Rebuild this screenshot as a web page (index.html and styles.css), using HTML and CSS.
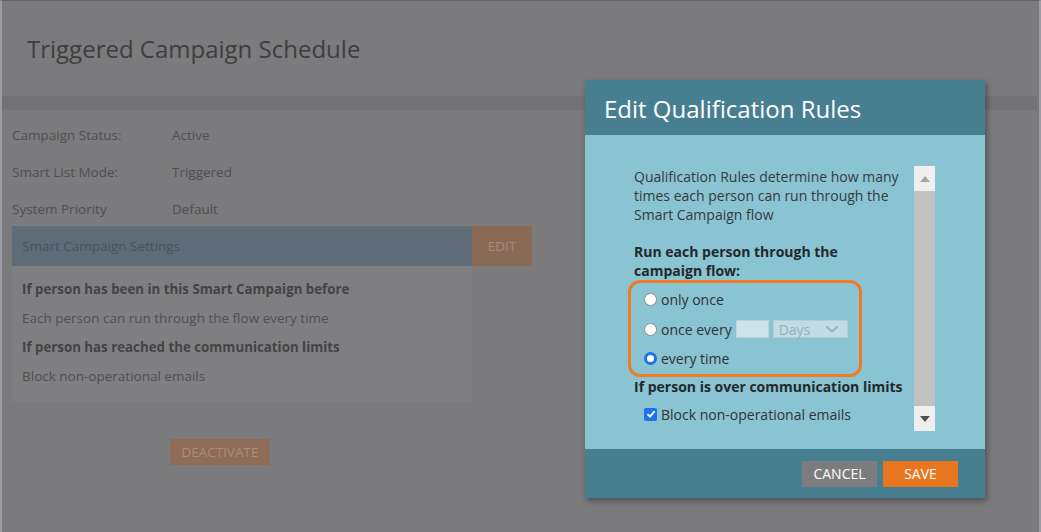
FILE: index.html
```html
<!DOCTYPE html>
<html>
<head>
<meta charset="utf-8">
<link rel="stylesheet" href="styles.css">
</head>
<body>
<div class="frame">
  <div class="page">
    <h1 class="title">Triggered Campaign Schedule</h1>
    <div class="band"></div>
    <div class="info">
      <div class="row"><span class="lbl">Campaign Status:</span><span>Active</span></div>
      <div class="row"><span class="lbl">Smart List Mode:</span><span>Triggered</span></div>
      <div class="row"><span class="lbl">System Priority</span><span>Default</span></div>
    </div>
    <div class="settings">
      <div class="settings-head">
        <span class="settings-title">Smart Campaign Settings</span>
        <span class="edit">EDIT</span>
      </div>
      <div class="settings-body">
        <p class="b">If person has been in this Smart Campaign before</p>
        <p>Each person can run through the flow every time</p>
        <p class="b">If person has reached the communication limits</p>
        <p>Block non-operational emails</p>
      </div>
    </div>
    <div class="deact-wrap"><span class="deact">DEACTIVATE</span></div>
  </div>

  <div class="modal">
    <div class="modal-head">Edit Qualification Rules</div>
    <div class="modal-body">
      <div class="scrollbox">
        <div class="content">
          <p class="intro">Qualification Rules determine how many times each person can run through the Smart Campaign flow</p>
          <p class="heading">Run each person through the campaign flow:</p>
          <div class="highlight">
            <label class="opt"><span class="radio"></span>only once</label>
            <label class="opt"><span class="radio"></span>once every <span class="num"></span><span class="sel">Days<svg width="14" height="8" viewBox="0 0 14 8"><path d="M1.5 1.5 L7 6.5 L12.5 1.5" fill="none" stroke="#98b4bd" stroke-width="1.8"/></svg></span></label>
            <label class="opt"><span class="radio on"></span>every time</label>
          </div>
          <p class="heading h2">If person is over communication limits</p>
          <label class="opt chk"><span class="check"><svg width="12" height="12" viewBox="0 0 12 12"><path d="M2.5 6.2 L5 8.7 L9.6 3.2" fill="none" stroke="#fff" stroke-width="1.9"/></svg></span>Block non-operational emails</label>
        </div>
        <div class="sbar">
          <div class="arrow"><svg width="10" height="6" viewBox="0 0 10 6"><path d="M0 6 L5 0 L10 6 Z" fill="#a3a3a3"/></svg></div>
          <div class="thumb"></div>
          <div class="arrow"><svg width="10" height="6" viewBox="0 0 10 6"><path d="M0 0 L5 6 L10 0 Z" fill="#505050"/></svg></div>
        </div>
      </div>
    </div>
    <div class="modal-foot">
      <span class="btn cancel">CANCEL</span>
      <span class="btn save">SAVE</span>
    </div>
  </div>
</div>
</body>
</html>
```

FILE: styles.css
```css
* { box-sizing: border-box; }
html, body { margin: 0; padding: 0; }
body {
  font-family: "Open Sans", "Liberation Sans", sans-serif;
  background: #7b7b7d;
  width: 1041px;
  height: 532px;
  overflow: hidden;
}
.frame {
  position: relative;
  width: 1041px;
  height: 532px;
  border-top: 1px solid #67676a;
  border-left: 2px solid #9c9ca6;
  border-right: 2px solid #9c9ca6;
  background: #7b7b7d;
}
.page { display: flex; flex-direction: column; }
.title {
  margin: 0;
  padding: 32px 0 0 25px;
  height: 95px;
  font-weight: 400;
  font-size: 24px;
  color: #3e3e40;
  line-height: 32px;
}
.band { height: 14px; background: #737375; margin-right: 2px; }
.info { padding: 13px 0 0 10px; display: flex; flex-direction: column; height: 116px; }
.row { display: flex; height: 37px; flex: none; font-size: 13.5px; color: #505052; line-height: 24px; }
.lbl { width: 160px; }
.settings { margin-left: 10px; width: 520px; }
.settings-head { display: flex; height: 40px; background: #5f6c77; }
.settings-title { flex: 1; padding-left: 10px; line-height: 40px; font-size: 13.5px; color: #4a535c; }
.edit { width: 60px; background: #8a6a55; color: #a08b7e; font-size: 13.5px; line-height: 40px; text-align: center; }
.settings-body { width: 460px; height: 136px; background: #7f7f82; padding: 12px 10px 0 10px; }
.settings-body p { margin: 0; height: 29px; font-size: 13.5px; line-height: 22px; color: #505052; }
.settings-body p.b { font-weight: 700; color: #434345; font-size: 13.3px; }
.deact-wrap { padding: 37px 0 0 168px; }
.deact { display: inline-block; width: 100px; height: 26px; background: #8e6c55; color: #a88d7b; font-size: 13.5px; line-height: 26px; text-align: center; }

.modal {
  position: absolute;
  left: 583px;
  top: 79px;
  width: 400px;
  height: 418px;
  display: flex;
  flex-direction: column;
  box-shadow: 2px 3px 6px rgba(0,0,0,0.35);
}
.modal-head {
  height: 55px;
  background: #477f91;
  color: #fff;
  font-size: 24px;
  line-height: 58px;
  padding-left: 19px;
}
.modal-body {
  height: 314px;
  background: #8ac3d2;
  padding: 31px 0 0 49px;
}
.scrollbox { display: flex; height: 265px; width: 300px; }
.content { flex: 1; color: #2e3436; font-size: 14px; padding-top: 1px; }
.content p { margin: 0; }
.intro { line-height: 19px; width: 272px; color: #333b3e; }
.heading { font-weight: 700; line-height: 19px; margin-top: 18px !important; width: 240px; color: #23292b; }
.heading.h2 { margin-top: 0 !important; width: 280px; }
.highlight {
  margin: 0 0 0 -6px;
  width: 234px;
  height: 97px;
  border: 3px solid #f07b25;
  border-radius: 12px;
  padding: 2px 0 0 13px;
}
.opt { display: flex; align-items: center; height: 29.5px; color: #2e3436; }
.radio {
  width: 13px; height: 13px; border-radius: 50%;
  background: #fff; border: 1px solid #8a8a8a;
  margin-right: 4px; flex: none;
}
.radio.on { border: 3px solid #1a73e8; background: #fff; }
.num { display: inline-block; width: 33px; height: 18px; background: #cde3ea; margin: 0 4px 0 4px; border: 1px solid #b9d5de; }
.sel { display: inline-flex; align-items: center; justify-content: space-between; width: 75px; height: 18px; background: #c1dce4; border: 1px solid #b0cfd8; padding: 0 8px 0 5px; color: #97b0b8; font-size: 14px; }
.chk { padding-left: 10px; height: 30px; margin-top: 3px; }
.check { width: 13px; height: 13px; background: #1a73e8; border-radius: 2px; margin-right: 4px; display: flex; align-items: center; justify-content: center; }
.sbar { width: 25px; background: #efefef; display: flex; flex-direction: column; align-items: center; }
.arrow { height: 25px; display: flex; align-items: center; justify-content: center; }
.thumb { width: 21px; flex: 1; background: #c1c1c1; }
.modal-foot {
  height: 49px;
  background: #477f91;
  display: flex;
  justify-content: flex-end;
  gap: 6px;
  padding: 12px 27px 0 0;
}
.btn { width: 75px; height: 26px; color: #fff; font-size: 14px; line-height: 26px; text-align: center; }
.cancel { background: #7c7c7e; }
.save { background: #e8761e; }
```
